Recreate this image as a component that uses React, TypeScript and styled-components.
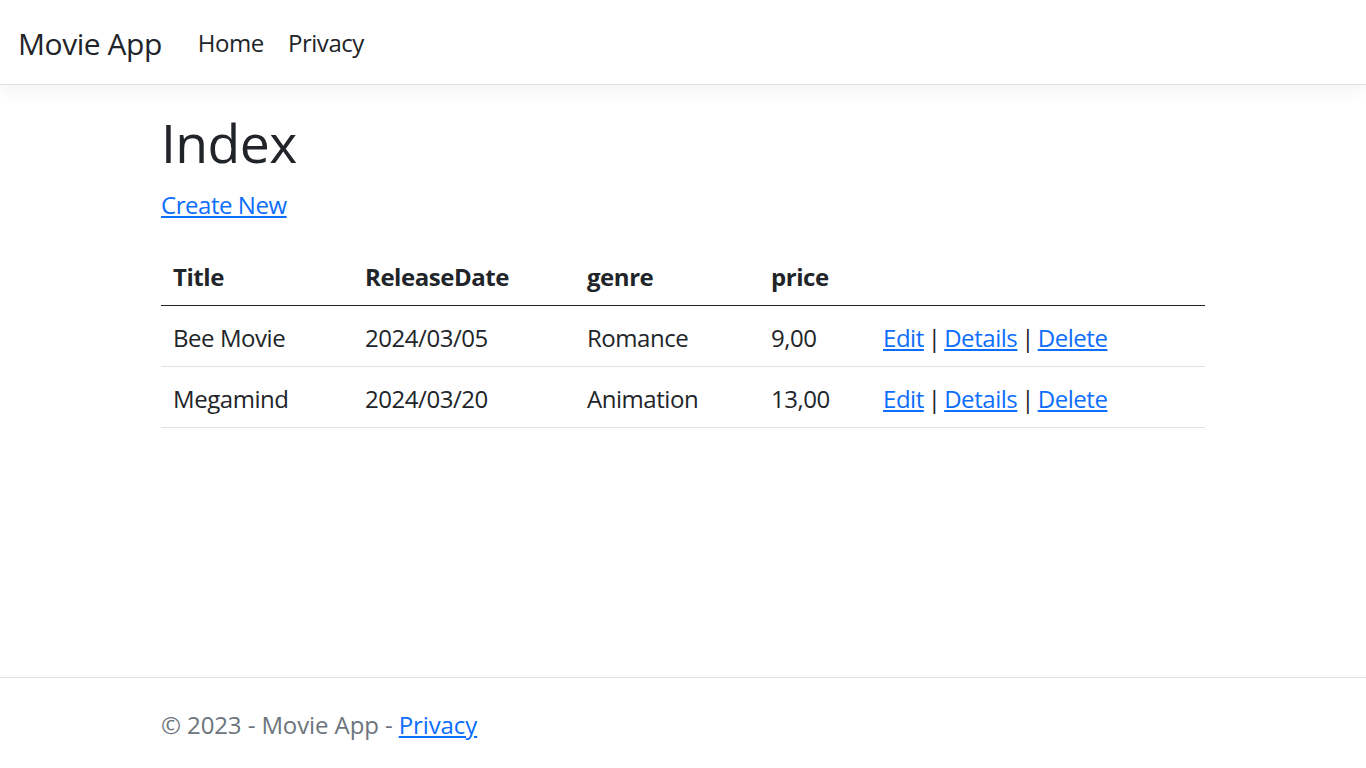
import React from "react";
import styled, { createGlobalStyle } from "styled-components";

const GlobalStyle = createGlobalStyle`
  *, *::before, *::after { box-sizing: border-box; }
  html, body { margin: 0; padding: 0; }
  body {
    font-family: "Open Sans", "Noto Sans", sans-serif;
    font-size: 24px;
    line-height: 1.5;
    letter-spacing: -0.45px;
    color: #212529;
    background: #fff;
  }
`;

const Page = styled.div`
  min-height: 100vh;
  display: flex;
  flex-direction: column;
`;

const Navbar = styled.header`
  height: 85px;
  display: flex;
  align-items: center;
  padding: 2px 18px 0;
  border-bottom: 1px solid #dee2e6;
  box-shadow: 0 6px 18px rgba(0, 0, 0, 0.05);
  background: #fff;
`;

const Brand = styled.a`
  font-size: 30px;
  color: #212529;
  text-decoration: none;
  margin-right: 24px;
  line-height: 1.5;
`;

const NavList = styled.nav`
  display: flex;
`;

const NavLink = styled.a`
  padding: 12px;
  color: #212529;
  text-decoration: none;
  font-size: 24px;
`;

const Main = styled.main`
  width: 1080px;
  margin: 24px auto 0;
  padding: 0 18px 24px;
  flex: 1;
`;

const Heading = styled.h1`
  font-size: 53.5px;
  font-weight: 500;
  line-height: 1.2;
  letter-spacing: -0.6px;
  margin: 0 0 12px;
  padding-top: 2px;
`;

const Para = styled.p`
  margin: 0 0 22px;
`;

const Link = styled.a`
  color: #0d6efd;
  text-decoration: underline;
`;

const Table = styled.table`
  width: 100%;
  border-collapse: collapse;
  table-layout: fixed;
`;

const Th = styled.th<{ $w?: number }>`
  text-align: left;
  font-weight: 700;
  padding: 14px 12px 10px;
  border-bottom: 1px solid #212529;
  width: ${(p) => (p.$w ? `${p.$w}px` : "auto")};
`;

const Td = styled.td<{ $actions?: boolean }>`
  padding: 14px 12px 10px;
  border-bottom: 1px solid #dee2e6;
  white-space: nowrap;
  word-spacing: ${(p) => (p.$actions ? "-2px" : "normal")};
`;

const Footer = styled.footer`
  border-top: 1px solid #dee2e6;
  line-height: 86px;
  padding-top: 4px;
  color: #6c757d;
  white-space: nowrap;
  letter-spacing: -0.1px;
`;

const FooterInner = styled.div`
  width: 1080px;
  margin: 0 auto;
  padding: 0 18px;
`;

const movies = [
  { title: "Bee Movie", date: "2024/03/05", genre: "Romance", price: "9,00" },
  { title: "Megamind", date: "2024/03/20", genre: "Animation", price: "13,00" },
];

export default function App() {
  return (
    <Page>
      <GlobalStyle />
      <Navbar>
        <Brand href="#">Movie App</Brand>
        <NavList>
          <NavLink href="#">Home</NavLink>
          <NavLink href="#">Privacy</NavLink>
        </NavList>
      </Navbar>
      <Main>
        <Heading>Index</Heading>
        <Para>
          <Link href="#">Create New</Link>
        </Para>
        <Table>
          <thead>
            <tr>
              <Th $w={192}>Title</Th>
              <Th $w={222}>ReleaseDate</Th>
              <Th $w={184}>genre</Th>
              <Th $w={112}>price</Th>
              <Th></Th>
            </tr>
          </thead>
          <tbody>
            {movies.map((m) => (
              <tr key={m.title}>
                <Td>{m.title}</Td>
                <Td>{m.date}</Td>
                <Td>{m.genre}</Td>
                <Td>{m.price}</Td>
                <Td $actions>
                  <Link href="#">Edit</Link> | <Link href="#">Details</Link> |{" "}
                  <Link href="#">Delete</Link>
                </Td>
              </tr>
            ))}
          </tbody>
        </Table>
      </Main>
      <Footer>
        <FooterInner>
          © 2023 - Movie App - <Link href="#">Privacy</Link>
        </FooterInner>
      </Footer>
    </Page>
  );
}
